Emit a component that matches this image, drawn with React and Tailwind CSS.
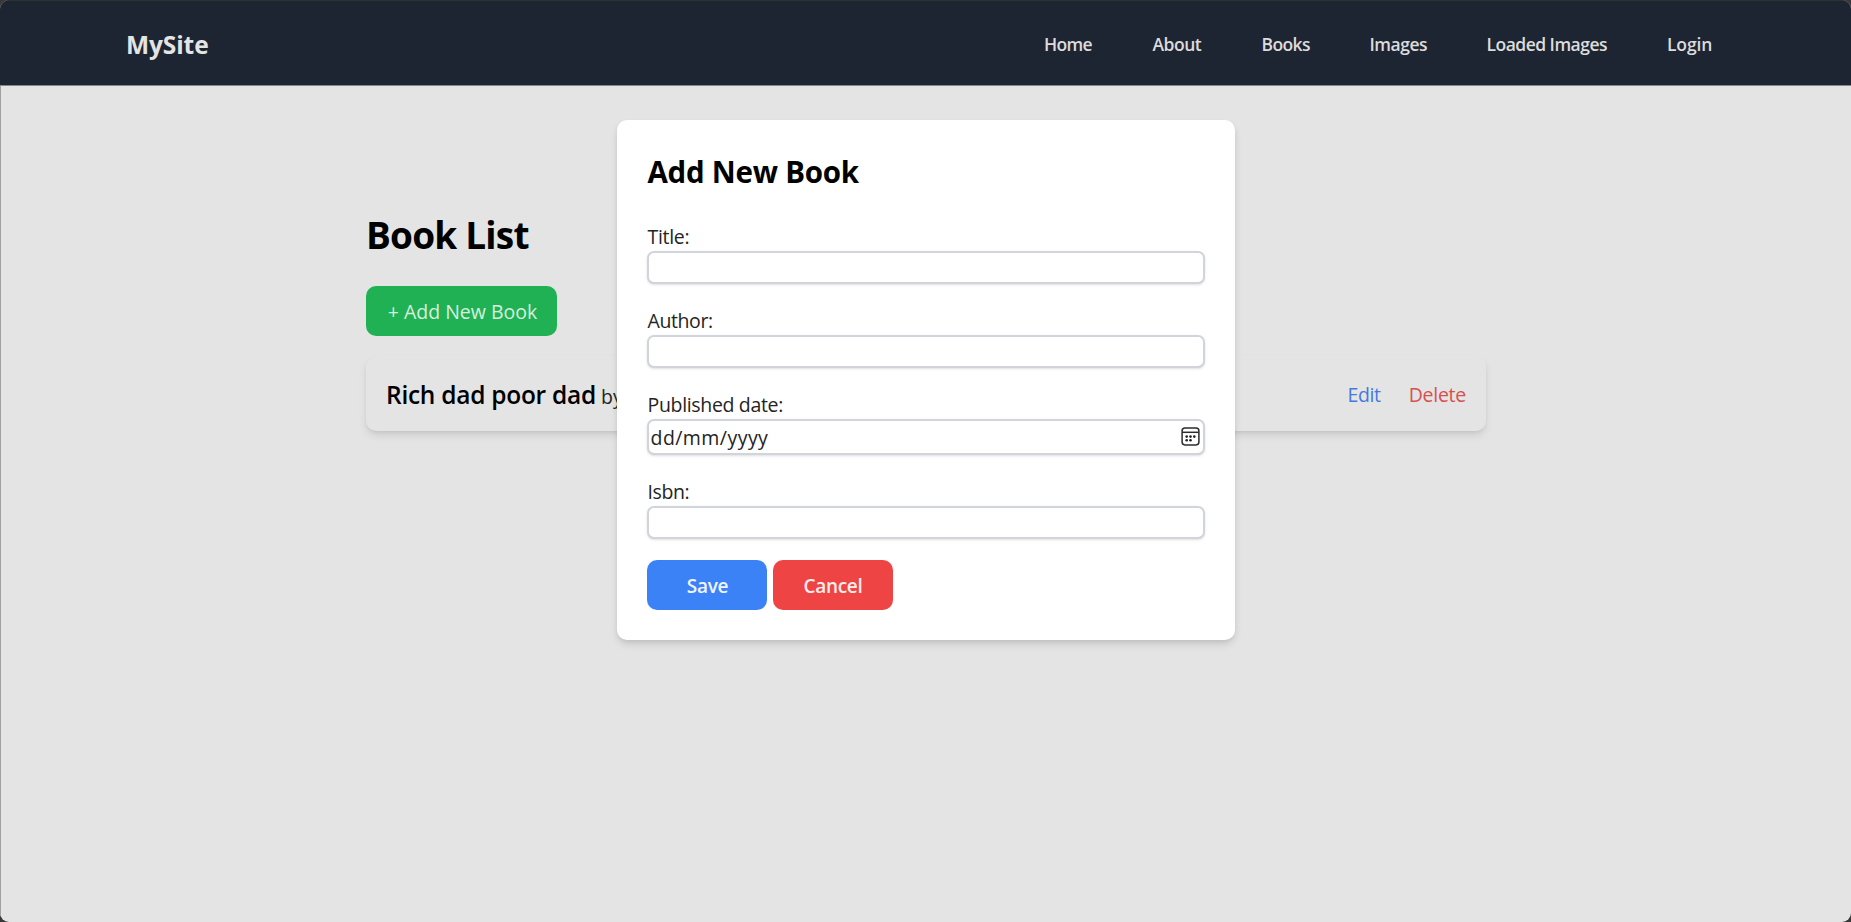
const links = [
  { label: 'Home', style: 'w-[48.5px] tracking-[-0.68px]' },
  { label: 'About', style: 'w-[49px] tracking-[-0.5px]' },
  { label: 'Books', style: 'w-[48px] tracking-[-0.61px]' },
  { label: 'Images', style: 'w-[57px] tracking-[-0.49px]' },
  { label: 'Loaded Images', style: 'w-[120.5px] tracking-[-0.52px]' },
  { label: 'Login', style: 'w-[45px] tracking-[-0.15px]' },
];

function CalendarIcon() {
  return (
    <svg className="h-[19px] w-[19px] shrink-0" viewBox="0 0 19 19" fill="none" stroke="#2c2c2c" strokeWidth="1.5">
      <rect x="1.1" y="1.1" width="16.8" height="16.8" rx="2.8" />
      <path d="M1.1 5.3h16.8" />
      <g fill="#1f1f1f" stroke="none">
        <circle cx="5.7" cy="9.6" r="1.3" />
        <circle cx="9.5" cy="9.6" r="1.3" />
        <circle cx="13.3" cy="9.6" r="1.3" />
        <circle cx="5.7" cy="13.3" r="1.3" />
        <circle cx="9.5" cy="13.3" r="1.3" />
      </g>
    </svg>
  );
}

function Field({ label, tracking, children }) {
  return (
    <div className="mb-[20.5px]">
      <label className={`block h-[30px] pt-px pl-[0.5px] text-[19.5px] leading-[30px] whitespace-nowrap text-[#242424] ${tracking}`}>{label}</label>
      {children}
    </div>
  );
}

function TextInput() {
  return <input type="text" className="block h-[33.5px] w-full rounded-[7px] border-2 border-[#d1d5db] bg-white shadow-sm" />;
}

function Header() {
  return (
    <header className="flex h-[85px] shrink-0 items-center justify-between border-t border-[#2e3134] bg-[#1e2532] pr-[139px] pl-[126px] text-[#e4e4e4]">
      <span className="pt-[3px] text-[24.5px] leading-[35px] font-bold tracking-[-0.1px]">MySite</span>
      <nav className="flex gap-[60px] pt-[2px] text-[17.5px] leading-[26px] font-semibold text-[#dcdcdc]">
        {links.map(({ label, style }) => (
          <a key={label} className={`block whitespace-nowrap ${style}`}>{label}</a>
        ))}
      </nav>
    </header>
  );
}

function BookModal() {
  return (
    <div className="absolute inset-x-0 top-[120px] flex justify-center">
      <div className="w-[618px] rounded-[10px] bg-white pt-[30px] pr-[30px] pb-[30px] pl-[30.5px] shadow-[0_5px_8px_-1px_rgba(0,0,0,0.12),0_2px_5px_-1px_rgba(0,0,0,0.08)]">
        <h2 className="mb-[27.5px] pt-px pl-[0.5px] text-[29.5px] leading-[42px] font-bold tracking-[-0.25px] text-black">Add New Book</h2>
        <Field label="Title:" tracking="tracking-[-0.3px]"><TextInput /></Field>
        <Field label="Author:" tracking="tracking-[-0.4px]"><TextInput /></Field>
        <Field label="Published date:" tracking="tracking-[-0.33px]">
          <div className="flex h-[36.5px] w-full items-center justify-between rounded-[7px] border-2 border-[#d1d5db] bg-white pr-[2.5px] pl-[1.5px] shadow-sm">
            <span className="pt-[2px] text-[19.5px] leading-[30px] tracking-[0.45px] text-[#242424]">dd/mm/yyyy</span>
            <CalendarIcon />
          </div>
        </Field>
        <Field label="Isbn:" tracking="tracking-[-0.41px]"><TextInput /></Field>
        <div className="flex gap-[6px] text-[19px] leading-[30px] font-semibold text-[#f0f4ff]">
          <button className="h-[50px] w-[120px] rounded-[10px] bg-[#3b82f6] pt-[2px] pl-px tracking-[-0.3px]">Save</button>
          <button className="h-[50px] w-[120px] rounded-[10px] bg-[#ef4444] pt-[2px] tracking-[-0.3px] text-[#ffeded]">Cancel</button>
        </div>
      </div>
    </div>
  );
}

export default function App() {
  return (
    <div className="h-[922px] w-full bg-[#383838] font-['Open_Sans',sans-serif]">
      <div className="relative flex h-full flex-col overflow-hidden rounded-[9px] bg-[#e4e4e4]">
        <Header />
        <main className="flex-1 border-t border-l border-t-[#85858b] border-l-[#a0a0a0] pl-[365px]">
          <h1 className="pt-[123.5px] text-[37px] leading-[50px] font-bold tracking-[-0.8px] text-black">Book List</h1>
          <button className="mt-[26px] block h-[50px] w-[191px] rounded-[10px] bg-[#20b155] pt-[2px] pl-[2px] text-[19.5px] leading-[30px] whitespace-nowrap text-[#d6efdf]">
            + Add New Book
          </button>
          <div className="mt-[20px] flex h-[75px] w-[1120px] items-center justify-between rounded-[10px] bg-[#e4e4e4] px-5 pt-[2px] shadow-[0_5px_8px_-1px_rgba(0,0,0,0.1),0_2px_5px_-2px_rgba(0,0,0,0.1)]">
            <p className="whitespace-nowrap text-[#242424]">
              <span className="text-[24.5px] leading-[35px] font-semibold tracking-[-0.27px] text-black">Rich dad poor dad</span>
              <span className="text-[19.5px]"> by</span>
            </p>
            <div className="flex gap-[28px] pt-[2px] text-[19.5px] leading-[30px]">
              <a className="tracking-[-0.4px] text-[#4679de]">Edit</a>
              <a className="tracking-[-0.25px] text-[#d8504e]">Delete</a>
            </div>
          </div>
        </main>
        <BookModal />
      </div>
    </div>
  );
}
